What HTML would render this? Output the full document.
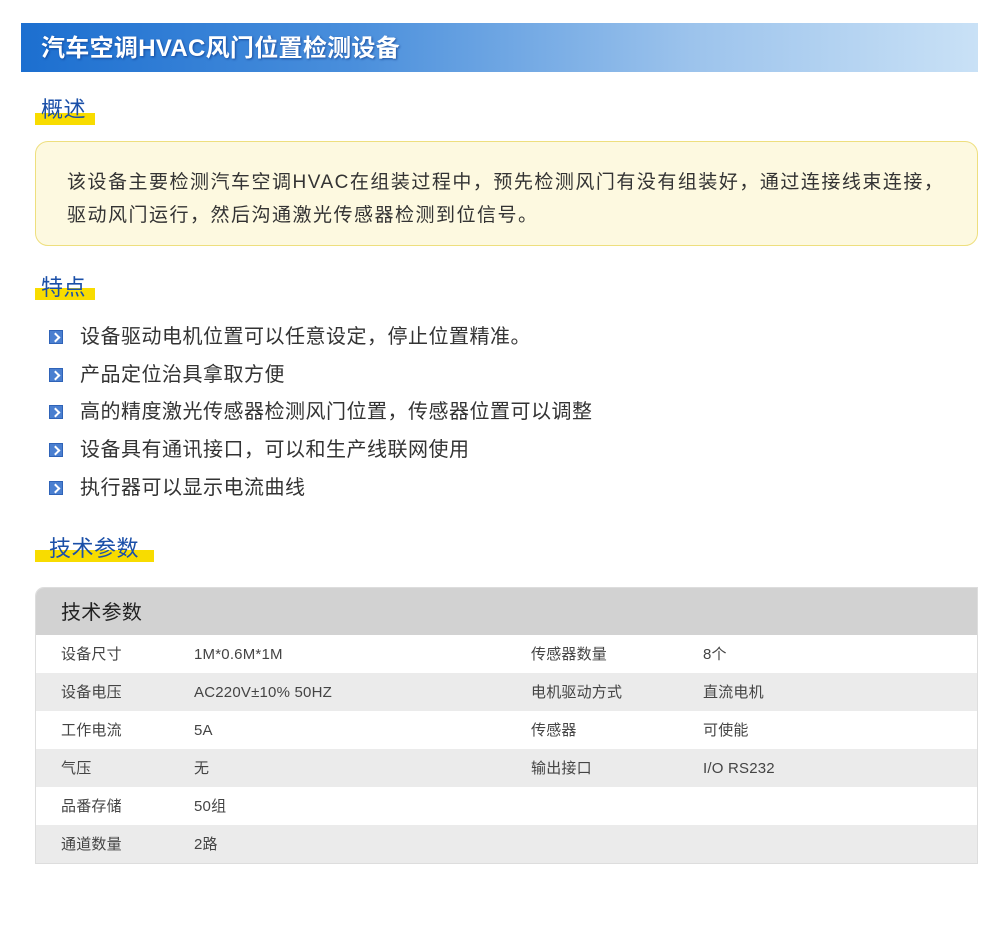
<!DOCTYPE html>
<html><head><meta charset="utf-8"><style>
*{margin:0;padding:0;box-sizing:border-box}
body{width:1000px;height:930px;background:#fff;font-family:"Liberation Sans","Noto Sans CJK SC",sans-serif;position:relative;overflow:hidden;color:#333}
.bar{position:absolute;left:21px;top:23px;width:957px;height:49px;background:linear-gradient(90deg,#1c6fd0 0%,#4a8fdc 35%,#9cc3ec 70%,#c9e1f6 100%)}
.bar span{position:absolute;left:20px;top:11px;font-size:24px;line-height:30px;color:#fff;font-weight:bold;letter-spacing:0.3px;text-shadow:1px 1px 2px rgba(0,40,120,.6)}
.h{position:absolute;font-size:22px;line-height:28px;color:#1a4fa8;letter-spacing:0.5px}
.h i{position:absolute;background:#f8dc00;height:12px;z-index:0}
.h b{position:relative;z-index:1;font-weight:normal}
.box{position:absolute;left:35px;top:141px;width:943px;height:105px;background:#fdf9e0;border:1px solid #eedf7e;border-radius:13px;padding:24px 0 0 31px;font-size:19px;line-height:33px;color:#333;letter-spacing:1.5px;white-space:nowrap}
.li{position:absolute;left:49px;font-size:20px;line-height:24px;color:#333;letter-spacing:0.5px}
.li i{position:absolute;left:0;top:5px;width:14px;height:14px;background:#4a7fd0;border:1px solid #2f63b8}
.li i:after{content:"";position:absolute;left:2px;top:3px;width:5px;height:5px;border-right:2px solid #fff;border-top:2px solid #fff;transform:rotate(45deg)}
.li span{position:absolute;left:31px;top:0px;white-space:nowrap}
.tbl{position:absolute;left:35px;top:587px;width:943px;border:1px solid #ddd;border-top-left-radius:9px;overflow:hidden}
.th{height:47px;background:#d2d2d2;font-size:20px;line-height:26px;padding:12px 0 0 25px;color:#222;letter-spacing:0.3px}
.r{height:38px;position:relative;font-size:15px;color:#444;letter-spacing:0.2px}
.r span{position:absolute;top:10px;line-height:20px}
</style></head><body>
<div class="bar"><span>汽车空调HVAC风门位置检测设备</span></div>

<div class="h" style="left:41px;top:96px"><i style="left:-6px;top:17px;width:60px"></i><b>概述</b></div>
<div class="box">该设备主要检测汽车空调HVAC在组装过程中，预先检测风门有没有组装好，通过连接线束连接，<br>驱动风门运行，然后沟通激光传感器检测到位信号。</div>

<div class="h" style="left:41px;top:274px"><i style="left:-6px;top:14px;width:60px"></i><b>特点</b></div>
<div class="li" style="top:325px"><i></i><span>设备驱动电机位置可以任意设定，停止位置精准。</span></div>
<div class="li" style="top:363px"><i></i><span>产品定位治具拿取方便</span></div>
<div class="li" style="top:400px"><i></i><span>高的精度激光传感器检测风门位置，传感器位置可以调整</span></div>
<div class="li" style="top:438px"><i></i><span>设备具有通讯接口，可以和生产线联网使用</span></div>
<div class="li" style="top:476px"><i></i><span>执行器可以显示电流曲线</span></div>

<div class="h" style="left:49px;top:535px"><i style="left:-14px;top:15px;width:119px"></i><b>技术参数</b></div>

<div class="tbl">
<div class="th">技术参数</div>
<div class="r" style="background:#fff"><span style="left:25px">设备尺寸</span><span style="left:158px">1M*0.6M*1M</span><span style="left:495px">传感器数量</span><span style="left:667px">8个</span></div>
<div class="r" style="background:#ebebeb"><span style="left:25px">设备电压</span><span style="left:158px">AC220V±10% 50HZ</span><span style="left:495px">电机驱动方式</span><span style="left:667px">直流电机</span></div>
<div class="r" style="background:#fff"><span style="left:25px">工作电流</span><span style="left:158px">5A</span><span style="left:495px">传感器</span><span style="left:667px">可使能</span></div>
<div class="r" style="background:#ebebeb"><span style="left:25px">气压</span><span style="left:158px">无</span><span style="left:495px">输出接口</span><span style="left:667px">I/O RS232</span></div>
<div class="r" style="background:#fff"><span style="left:25px">品番存储</span><span style="left:158px">50组</span></div>
<div class="r" style="background:#ebebeb"><span style="left:25px">通道数量</span><span style="left:158px">2路</span></div>
</div>
</body></html>
